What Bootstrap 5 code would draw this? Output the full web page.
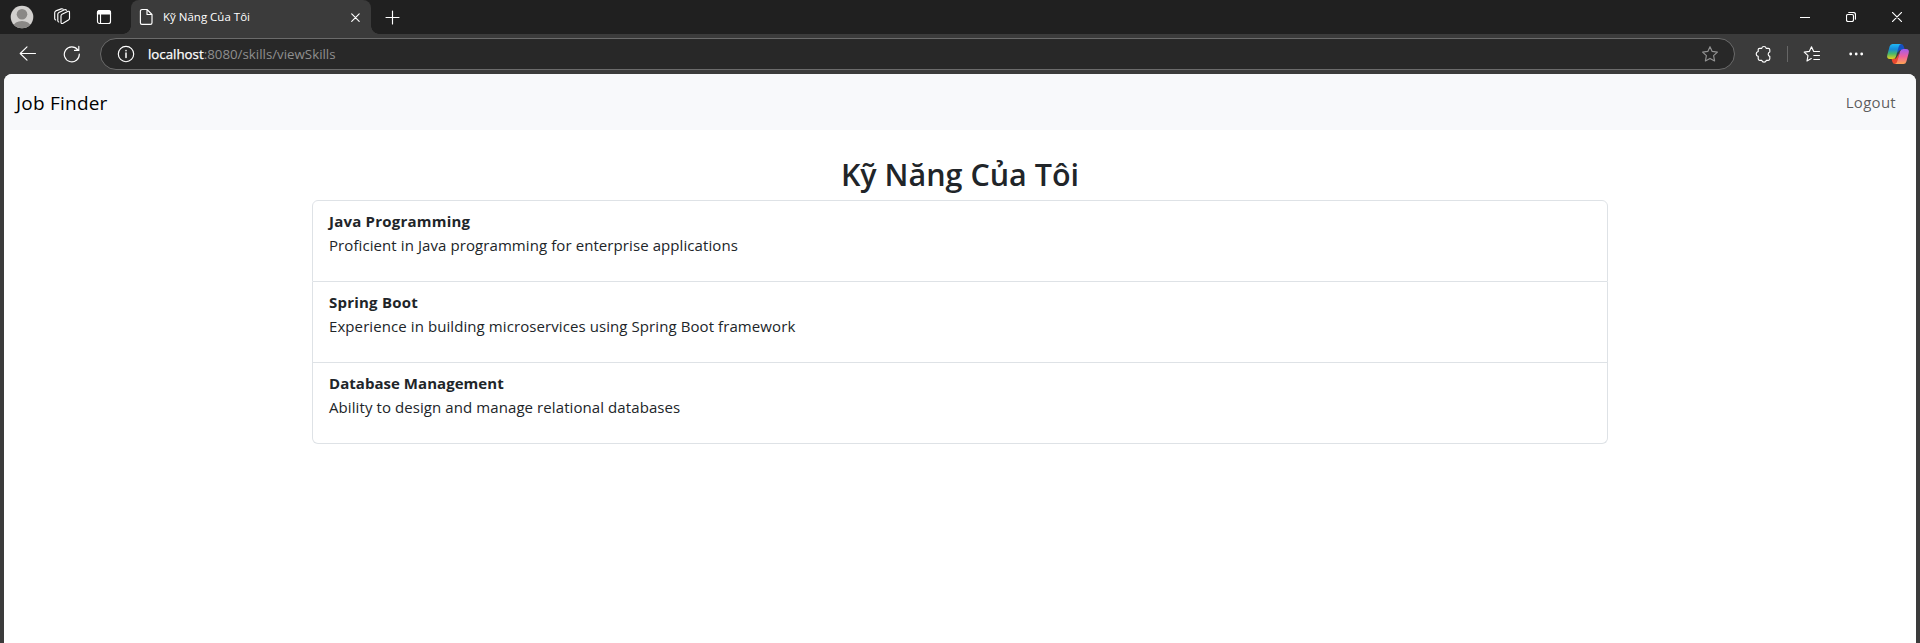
<!DOCTYPE html>
<html lang="vi">
<head>
<meta charset="utf-8">
<title>Kỹ Năng Của Tôi</title>
<link href="https://cdn.jsdelivr.net/npm/bootstrap@5.3.0/dist/css/bootstrap.min.css" rel="stylesheet">
<style>
  body { font-family: "Open Sans", "Noto Sans", sans-serif; background: #3b3b3b; }
  svg { display: block; flex: none; fill: none; stroke: #fff; stroke-width: 1.15; stroke-linecap: round; stroke-linejoin: round; }
  svg.filled { stroke: none; }
  .titlebar { height: 34px; background: #202020; padding-left: 10px; }
  .icon-workspaces { margin-left: 20px; }
  .icon-tabs { margin-left: 25px; }
  .icon-newtab { margin-left: 14px; }
  .window-controls { gap: 36px; margin-right: 18px; }
  .tab-active { position: relative; width: 240px; height: 34px; margin-left: 19px; padding: 0 11px 0 7px; background: #3b3b3b; border-radius: 8px 8px 0 0; }
  .tab-active::before, .tab-active::after { content: ""; position: absolute; bottom: 0; width: 8px; height: 8px; }
  .tab-active::before { left: -8px; background: radial-gradient(circle at 0 0, #202020 7.5px, #3b3b3b 8px); }
  .tab-active::after { right: -8px; background: radial-gradient(circle at 100% 0, #202020 7.5px, #3b3b3b 8px); }
  .tab-title { color: #fff; font-size: 11.5px; line-height: 16px; margin-left: 9px; }
  .toolbar { height: 40px; padding: 0 10px 0 19px; }
  .icon-reload { margin-left: 26px; }
  .address { width: 1635px; height: 32px; margin-left: 19px; padding: 0 15px 0 16px; background: #282828; border: 1px solid #6b6b6b; border-radius: 16px; }
  .url-text { font-size: 13.3px; line-height: 20px; margin-left: 13px; color: #8f8f8f; }
  .url-host { color: #fff; -webkit-text-stroke: .25px #fff; }
  .icon-star { stroke: #929292; }
  .icon-extensions { margin-left: 20px; }
  .tool-divider { width: 1px; height: 16px; background: #666; margin-left: 15px; }
  .icon-favorites { margin-left: 15px; }
  .icon-more { margin-left: 27px; fill: #fff; }
  .viewport { height: 569px; margin: 0 4px; border-radius: 8px 8px 0 0; overflow: hidden; }
  .site-nav { height: 56px; background: #f8f9fb; }
  .site-nav .navbar-brand { font-size: 19px; line-height: 30px; letter-spacing: .22px; padding-top: 6px; margin-right: 0; }
  .site-nav .nav-link { font-size: 15px; line-height: 24px; letter-spacing: .28px; color: rgba(0,0,0,.65); }
  .page-title { font-size: 30.5px; font-weight: 600; line-height: 38.4px; padding-top: 1px; margin-bottom: 7px; }
  .skills { font-size: 15px; line-height: 24px; letter-spacing: .085px; --bs-list-group-border-color: #dee2e6; }
  .skills strong { letter-spacing: .22px; }
  .skills li:last-child strong { letter-spacing: .04px; }
</style>
</head>
<body class="overflow-hidden">
<div class="titlebar d-flex align-items-center">
  <svg class="filled" width="24" height="24" viewBox="0 0 24 24"><defs><clipPath id="face"><circle cx="12" cy="12" r="11.3"/></clipPath></defs><circle cx="12" cy="12" r="11.3" fill="#d2d0ce"/><g clip-path="url(#face)" fill="#8a8886"><circle cx="12" cy="9.3" r="5.3"/><ellipse cx="12" cy="21.5" rx="8.5" ry="5.5"/></g></svg>
  <svg class="icon-workspaces" width="17" height="18" viewBox="0 0 17 18"><path d="M7 8Q7 6.800 8 6.200L13.700 3.400Q15.500 2.800 15.500 4.400V10.200Q15.500 11.400 14.400 12.100L9 15.300Q7 16 7 14.300ZM4.700 14Q3.800 13.700 3.800 12.500V6.300Q3.800 5.100 4.900 4.500L10.500 1.700Q12 1.200 12.400 2.300M1.700 12Q.700 11.700 .700 10.500V4.700Q.700 3.500 1.800 2.900L7.300 .9Q8.500 .600 9 1.200"/></svg>
  <svg class="icon-tabs" width="16" height="16" viewBox="0 0 16 16"><rect x="1.5" y="1.5" width="13" height="13" rx="2"/><path d="M1.5 5V3.5a2 2 0 0 1 2-2h9a2 2 0 0 1 2 2V5Z" fill="#fff"/><path d="M4.500 5v9.500"/></svg>
  <div class="tab-active d-flex align-items-center">
    <svg width="16" height="18" viewBox="0 0 16 18"><path d="M4 1.5h5l5 5v8.300a1.600 1.600 0 0 1-1.600 1.600H4a1.600 1.600 0 0 1-1.600-1.600V3.100A1.600 1.600 0 0 1 4 1.500ZM9 1.700v4.800h5"/></svg>
    <span class="tab-title text-nowrap">Kỹ Năng Của Tôi</span>
    <svg class="ms-auto" width="9" height="9" viewBox="0 0 9 9"><path d="m.7.8 7.5 7.5m0-7.5L.7 8.3"/></svg>
  </div>
  <svg class="icon-newtab" width="15" height="15" viewBox="0 0 15 15"><path d="M7.5 1v13M1 7.5h13"/></svg>
  <div class="window-controls d-flex align-items-center ms-auto">
    <svg width="10" height="10" viewBox="0 0 10 10"><path d="M0 5.5h10"/></svg>
    <svg width="10" height="10" viewBox="0 0 10 10"><rect x=".5" y="2.5" width="7" height="7" rx="1.4"/><path d="M2.8.5H7.3a2.2 2.2 0 0 1 2.2 2.2v4.4"/></svg>
    <svg width="10" height="10" viewBox="0 0 10 10"><path d="m.4.4 9.2 9.2m0-9.2L.4 9.6"/></svg>
  </div>
</div>
<div class="toolbar d-flex align-items-center">
  <svg width="18" height="16" viewBox="0 0 18 16"><path d="M16.500 7.500H1.200M8 .9 1.200 7.500 8 14.100"/></svg>
  <svg class="icon-reload" width="18" height="18" viewBox="0 0 18 18"><path d="M16.300 9A7.500 7.500 0 1 1 14.800 4.800M15.800 1.200v4.200h-4.300"/></svg>
  <div class="address d-flex align-items-center">
    <svg width="18" height="18" viewBox="0 0 18 18"><circle cx="9" cy="9" r="7.700"/><path d="M9 8v4.600M9 5.500v.2" stroke-width="1.500"/></svg>
    <span class="url-text text-nowrap"><span class="url-host">localhost</span>:8080/skills/viewSkills</span>
    <svg class="icon-star ms-auto" width="18" height="18" viewBox="0 0 18 18"><path d="m9 1.700 2.200 4.700 5.200.7-3.800 3.600 1 5.200L9 13.400l-4.600 2.500 1-5.200L1.600 7.100l5.200-.7Z"/></svg>
  </div>
  <svg class="icon-extensions" width="17" height="18" viewBox="0 0 17 18"><path d="M3.200 6.500V4.600Q3.200 3.300 4.500 3.300H6.700A2.300 2.300 0 0 1 11.200 3.300H13.300Q14.800 3.300 14.800 4.800V7A2.300 2.300 0 0 0 14.800 11.400V13.800Q14.800 15.300 13.300 15.300H11.300A2.300 2.300 0 0 1 6.800 15.300H4.700Q3.200 15.300 3.200 13.800V11.400A2.500 2.500 0 0 1 3.200 6.500Z"/></svg>
  <div class="tool-divider"></div>
  <svg class="icon-favorites" width="18" height="18" viewBox="0 0 18 18"><path d="M11.800 6.500H10.700L8.500 1.800 6.300 6.400 1.200 7.100 5 10.700 4 16 8.300 13.600M11.800 6.500H16.500M10.800 10.500H16.500M10.800 14.500H16.500"/></svg>
  <svg class="icon-more filled" width="16" height="16" viewBox="0 0 16 16"><circle cx="2.700" cy="8" r="1.400"/><circle cx="8.200" cy="8" r="1.400"/><circle cx="13.700" cy="8" r="1.400"/></svg>
  <svg class="filled ms-auto" width="24" height="22" viewBox="0 0 24 22">
    <defs>
      <linearGradient id="cool" x1="0" y1="0" x2="0" y2="1"><stop offset="0" stop-color="#20b8f5"/><stop offset=".35" stop-color="#168bd8"/><stop offset=".65" stop-color="#49b86a"/><stop offset="1" stop-color="#e8d01c"/></linearGradient>
      <linearGradient id="warm" x1="0" y1="0" x2="0" y2="1"><stop offset="0" stop-color="#a05cf0"/><stop offset=".5" stop-color="#ee609d"/><stop offset="1" stop-color="#ffa452"/></linearGradient>
    </defs>
    <path fill="#1550c0" d="M12 1h3q2 0 2.600 2L19 7h-5l-4 4Z"/>
    <path fill="#e9492f" d="M12 21H9q-2 0-2.600-2L5.400 15.500H10l3-5Z"/>
    <path fill="url(#cool)" d="M6.500 1H15q-1.700.4-2.400 3L10 13.500Q9.300 16 6.500 16H4Q.3 16 1.300 12L3.600 3.500Q4.300 1 6.500 1Z"/>
    <path fill="url(#warm)" d="M17.500 21H9Q10.700 20.600 11.400 18L14 8.500Q14.700 6 17.500 6H20Q23.700 6 22.700 10L20.400 18.500Q19.700 21 17.500 21Z"/>
  </svg>
</div>
<main class="viewport bg-white">
  <nav class="navbar navbar-expand-lg site-nav">
    <div class="container-fluid">
      <a class="navbar-brand" href="#">Job Finder</a>
      <ul class="navbar-nav ms-auto">
        <li class="nav-item"><a class="nav-link" href="#">Logout</a></li>
      </ul>
    </div>
  </nav>
  <div class="container mt-4">
    <h2 class="page-title text-center">Kỹ Năng Của Tôi</h2>
    <ul class="list-group skills">
      <li class="list-group-item"><strong>Java Programming</strong><p>Proficient in Java programming for enterprise applications</p></li>
      <li class="list-group-item"><strong>Spring Boot</strong><p>Experience in building microservices using Spring Boot framework</p></li>
      <li class="list-group-item"><strong>Database Management</strong><p>Ability to design and manage relational databases</p></li>
    </ul>
  </div>
</main>
<script src="https://cdn.jsdelivr.net/npm/bootstrap@5.3.0/dist/js/bootstrap.bundle.min.js"></script>
</body>
</html>
